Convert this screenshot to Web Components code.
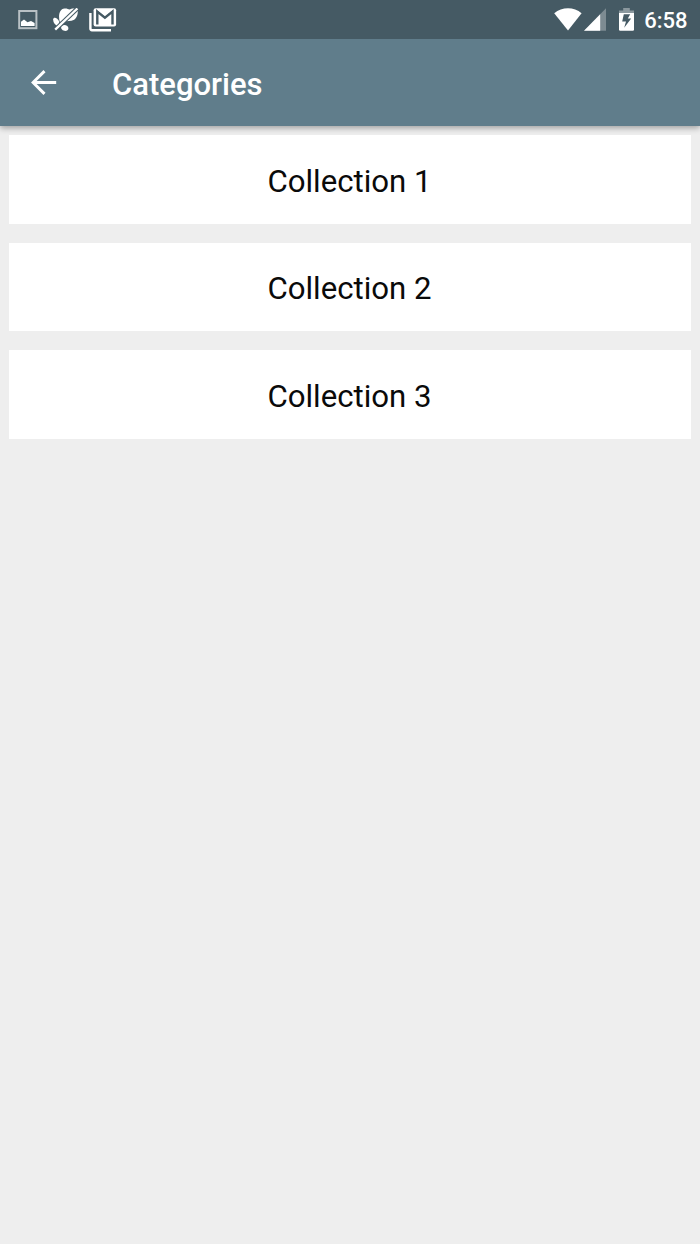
<!DOCTYPE html>
<html lang="en">
<head>
<meta charset="utf-8">
<title>Categories</title>
<style>
  body {
    margin: 0;
    background: #eee;
    font-family: Roboto, "Liberation Sans", sans-serif;
  }
</style>
</head>
<body>
<category-screen></category-screen>

<script>
const ICONS = {
  image: {
    size: [20, 20],
    body: `
      <rect x="1.2" y="1" width="17.2" height="17.2" fill="none" stroke="#b9c1c5" stroke-width="2"/>
      <path fill="#fff" d="M3 16V11.8L6 9.4L9.5 12.2L13 11L16.6 13V16Z"/>`
  },
  butterfly: {
    size: [26, 24],
    body: `
      <g fill="#fff">
        <path d="M6.6 13.4C5.2 7.5 6.3 1 11.5 .5C14 .3 15.3 1.2 16.5 1.5C18.5 .2 24.5-.5 24.8 3C25 7.5 22.8 12.2 18.5 12.8L13.3 13.2L10.4 14.8Z"/>
        <path d="M.2 11.3C.5 8.8 4.3 9.3 6.4 14L5 18.4C2.2 17.4-.1 14.5 .2 11.3Z"/>
        <path d="M8.6 18C11.3 15.9 15.5 17.4 15.4 20.5C15.3 23.4 11 23.7 9 21.5C8 20.4 7.8 19 8.6 18Z"/>
      </g>
      <path d="M1.8 22L24.2 .6" stroke="#455a64" stroke-width="4.4"/>
      <path d="M2.2 21.6L24.4 .5" stroke="#fff" stroke-width="2.3"/>`
  },
  mail: {
    size: [28, 24],
    body: `
      <path d="M1.4 5V20.6Q1.4 22.2 3 22.2H22" fill="none" stroke="#fff" stroke-width="2.4"/>
      <rect x="4.6" y=".3" width="22.5" height="18.3" rx="2" fill="#fff"/>
      <path d="M8.3 16.4V3.6L15.9 9.6L23.5 3.6V16.4" fill="none" stroke="#455a64" stroke-width="2.4"/>
      <path d="M8.6 2H23L15.9 7.5Z" fill="#fff"/>`
  },
  wifi: {
    size: [28, 23],
    body: `<path fill="#fff" d="M.2 5.2C8-1.3 20-1.3 27.6 5.2L14 22.4Z"/>`
  },
  signal: {
    size: [22, 23],
    body: `
      <path fill="#7d8b92" d="M22 .2V22.7H0Z"/>
      <path fill="#fff" d="M16.2 6.2V22.7H0Z"/>`
  },
  battery: {
    size: [15, 23],
    body: `
      <path fill="#8b989e" d="M4.2 0H10.8V2.5H15V5.2H0V2.5H4.2Z"/>
      <path fill="#fff" d="M0 5H15V21.5Q15 22.7 13.8 22.7H1.2Q0 22.7 0 21.5Z"/>
      <path fill="#455a64" d="M4.8 6.2H11.2L8.8 10.6H12.2L5.2 19.8L7 13.6H3.2Z"/>`
  },
  back: {
    size: [26, 26],
    body: `<path d="M25.2 12.5H2.2M13.5 1.1L2.1 12.5L13.5 23.9" fill="none" stroke="#fff" stroke-width="2.9"/>`
  }
}

class AppIcon extends HTMLElement {
  constructor() {
    super()
    this.attachShadow({ mode: 'open' })
  }
  connectedCallback() {
    const { size: [w, h], body } = ICONS[this.getAttribute('name')]
    this.shadowRoot.innerHTML = `
      <style>
        :host { display: block; flex: none; }
        svg { display: block; }
      </style>
      <svg width="${w}" height="${h}" viewBox="0 0 ${w} ${h}">${body}</svg>
    `
  }
}

class StatusBar extends HTMLElement {
  constructor() {
    super()
    this.attachShadow({ mode: 'open' })
    this.shadowRoot.innerHTML = `
      <style>
        :host {
          display: flex;
          justify-content: space-between;
          position: relative;
          z-index: 1;
          box-sizing: border-box;
          height: 39px;
          padding: 8px 12.5px 0 18px;
          background: #455a64;
          color: #fff;
        }
        .left, .right {
          display: flex;
          align-items: flex-start;
        }
        .left { gap: 15px; }
        .left :nth-child(1) { margin-top: 2px; }
        .left :nth-child(3) { margin-left: -5px; }
        .wifi { margin-right: 2px; }
        .signal { margin-right: 13px; }
        .time {
          margin-left: 10px;
          font-size: 22px;
          font-weight: 500;
          line-height: 26px;
        }
      </style>
      <div class="left">
        <app-icon name="image"></app-icon>
        <app-icon name="butterfly"></app-icon>
        <app-icon name="mail"></app-icon>
      </div>
      <div class="right">
        <app-icon class="wifi" name="wifi"></app-icon>
        <app-icon class="signal" name="signal"></app-icon>
        <app-icon name="battery"></app-icon>
        <span class="time"><slot></slot></span>
      </div>
    `
  }
}

class AppBar extends HTMLElement {
  constructor() {
    super()
    this.attachShadow({ mode: 'open' })
    this.shadowRoot.innerHTML = `
      <style>
        :host {
          display: flex;
          align-items: center;
          gap: 55px;
          box-sizing: border-box;
          height: 87px;
          padding-left: 31px;
          background: #607d8b;
          color: #fff;
          box-shadow: 0 2px 6px rgba(0, 0, 0, .34);
        }
        h1 {
          margin: 4px 0 0;
          font-size: 31px;
          font-weight: 500;
          line-height: 36px;
        }
      </style>
      <app-icon name="back"></app-icon>
      <h1><slot></slot></h1>
    `
  }
}

class CollectionCard extends HTMLElement {
  constructor() {
    super()
    this.attachShadow({ mode: 'open' })
    this.shadowRoot.innerHTML = `
      <style>
        :host {
          display: flex;
          align-items: center;
          justify-content: center;
          box-sizing: border-box;
          height: 88.5px;
          padding: 4px 1px 0 0;
          background: #fff;
          color: #0a0a0a;
          font-size: 31.2px;
          line-height: 36px;
        }
      </style>
      <span><slot></slot></span>
    `
  }
}

class CategoryScreen extends HTMLElement {
  constructor() {
    super()
    this.attachShadow({ mode: 'open' })
    this.shadowRoot.innerHTML = `
      <style>
        :host {
          display: flex;
          flex-direction: column;
          height: 100vh;
          background: #eee;
        }
        main {
          display: flex;
          flex-direction: column;
          gap: 19px;
          padding: 9.4px 9.4px 0;
        }
      </style>
      <status-bar>6:58</status-bar>
      <app-bar>Categories</app-bar>
      <main>
        <collection-card>Collection 1</collection-card>
        <collection-card>Collection 2</collection-card>
        <collection-card>Collection 3</collection-card>
      </main>
    `
  }
}

customElements.define('app-icon', AppIcon)
customElements.define('status-bar', StatusBar)
customElements.define('app-bar', AppBar)
customElements.define('collection-card', CollectionCard)
customElements.define('category-screen', CategoryScreen)
</script>
</body>
</html>
